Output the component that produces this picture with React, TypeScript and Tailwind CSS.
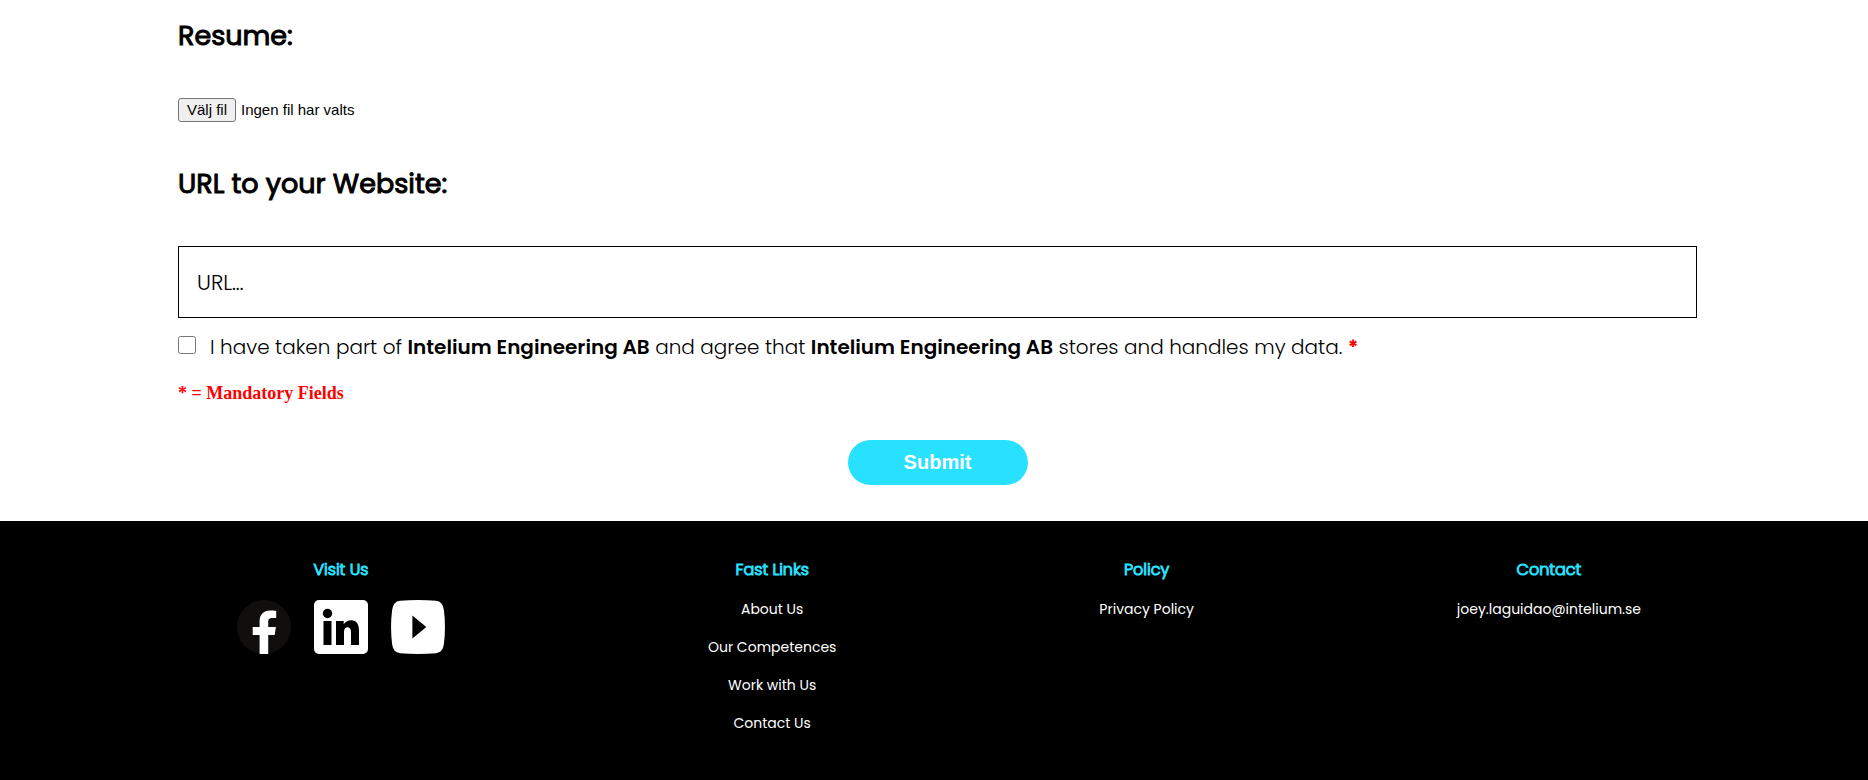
import { useRef, useState } from "react";

const fastLinks = ["About Us", "Our Competences", "Work with Us", "Contact Us"];

function FacebookIcon() {
  return (
    <svg viewBox="0 0 54 54" className="size-[54px]" aria-hidden="true">
      <circle cx="27" cy="27" r="27" fill="#100f0d" />
      <path
        fill="#fff"
        d="M22.600 54V35H15.700V27H22.600V21.500C22.600 14.500 26.500 10.500 33 10.500C35.400 10.500 37.500 10.600 39.200 10.900V18H35.500C32.200 18 31.200 19.600 31.200 22V27H38.900L37.700 35H31.200V54Z"
      />
    </svg>
  );
}

function LinkedInIcon() {
  return (
    <svg viewBox="0 0 54 54" className="size-[54px]" aria-hidden="true">
      <rect width="54" height="54" rx="5" fill="#fff" />
      <circle cx="13.500" cy="13.500" r="4.700" />
      <path d="M9.500 21H17.500V45H9.500ZM22 21H29.700V24.300C31 22 33.800 20.300 37 20.300C43 20.300 45 24.500 45 31V45H37V32.500C37 29.300 36.200 27.200 33.700 27.200C31 27.200 30 29.400 30 32.500V45H22Z" />
    </svg>
  );
}

function YouTubeIcon() {
  return (
    <svg viewBox="0 0 54 54" className="size-[54px]" aria-hidden="true">
      <path
        fill="#fff"
        d="M9 .8Q27 -.6 45 .8Q51.800 1.500 52.900 10Q55 27 52.900 44Q51.800 52.500 45 53.200Q27 54.600 9 53.200Q2.200 52.500 1.100 44Q-1 27 1.100 10Q2.200 1.500 9 .8Z"
      />
      <path d="M21.400 15.500L35.300 27L21.400 38.500Z" />
    </svg>
  );
}

function ColumnTitle({ children }: { children: string }) {
  return (
    <h3 className="text-base font-light text-[#27e1ff] [-webkit-text-stroke:1px]">{children}</h3>
  );
}

export default function App() {
  const fileInput = useRef<HTMLInputElement>(null);
  const [fileName, setFileName] = useState("Ingen fil har valts");

  return (
    <div className="bg-white font-['Poppins','Inter',sans-serif] text-black">
      <form className="flex flex-col pr-[171px] pl-[178px]" onSubmit={(e) => e.preventDefault()}>
        <h2 className="pt-4 text-[27px] leading-10 font-normal [-webkit-text-stroke:1px]">
          <label htmlFor="resume">Resume:</label>
        </h2>
        <div className="mt-[42px] flex h-6 items-center gap-[5px] font-['Liberation_Sans',sans-serif] text-[15px]">
          <button
            type="button"
            onClick={() => fileInput.current?.click()}
            className="h-6 rounded-[3px] border border-[#767676] bg-[#efefef] px-2 leading-5"
          >
            Välj fil
          </button>
          <span>{fileName}</span>
          <input
            ref={fileInput}
            id="resume"
            type="file"
            tabIndex={-1}
            className="sr-only"
            onChange={(e) => setFileName(e.target.files?.[0]?.name ?? "Ingen fil har valts")}
          />
        </div>
        <h2 className="mt-[42px] text-[27px] leading-10 font-normal [-webkit-text-stroke:1px]">
          <label htmlFor="url">URL to your Website:</label>
        </h2>
        <input
          id="url"
          type="text"
          placeholder="URL..."
          className="mt-[42px] h-[72px] w-full border border-black px-[18px] text-[21px] font-light placeholder:text-black"
        />
        <div className="mt-3 flex items-center gap-[14px]">
          <input id="consent" type="checkbox" className="mb-1 size-[18px]" />
          <label htmlFor="consent" className="text-xl leading-[34px] font-light">
            I have taken part of <b className="font-semibold">Intelium Engineering AB</b> and agree that{" "}
            <b className="font-semibold">Intelium Engineering AB</b> stores and handles my data.{" "}
            <b className="font-bold text-[#ff0000]">*</b>
          </label>
        </div>
        <p className="mt-[17px] font-['Liberation_Serif',serif] text-lg leading-6 font-bold text-[#ff0000]">
          * = Mandatory Fields
        </p>
        <button
          type="submit"
          className="mt-[35px] mb-9 h-[45px] w-[180px] self-center rounded-[23px] bg-[#27e1ff] pb-[2px] font-['Liberation_Sans',sans-serif] text-xl font-bold text-white"
        >
          Submit
        </button>
      </form>
      <footer className="flex min-h-[259px] justify-between bg-black pt-[37px] pr-[227px] pb-8 pl-[237px] text-center text-sm text-white">
        <div>
          <ColumnTitle>Visit Us</ColumnTitle>
          <div className="mt-[18px] flex gap-[23px]">
            <a href="#facebook" aria-label="Facebook">
              <FacebookIcon />
            </a>
            <a href="#linkedin" aria-label="LinkedIn">
              <LinkedInIcon />
            </a>
            <a href="#youtube" aria-label="YouTube">
              <YouTubeIcon />
            </a>
          </div>
        </div>
        <nav>
          <ColumnTitle>Fast Links</ColumnTitle>
          <ul className="mt-[15px] flex flex-col gap-[14px] leading-6">
            {fastLinks.map((name) => (
              <li key={name}>
                <a href="#">{name}</a>
              </li>
            ))}
          </ul>
        </nav>
        <div>
          <ColumnTitle>Policy</ColumnTitle>
          <a href="#privacy" className="mt-[15px] block leading-6">
            Privacy Policy
          </a>
        </div>
        <div>
          <ColumnTitle>Contact</ColumnTitle>
          <a href="mailto:joey.laguidao@intelium.se" className="mt-[15px] block leading-6">
            joey.laguidao@intelium.se
          </a>
        </div>
      </footer>
    </div>
  );
}
